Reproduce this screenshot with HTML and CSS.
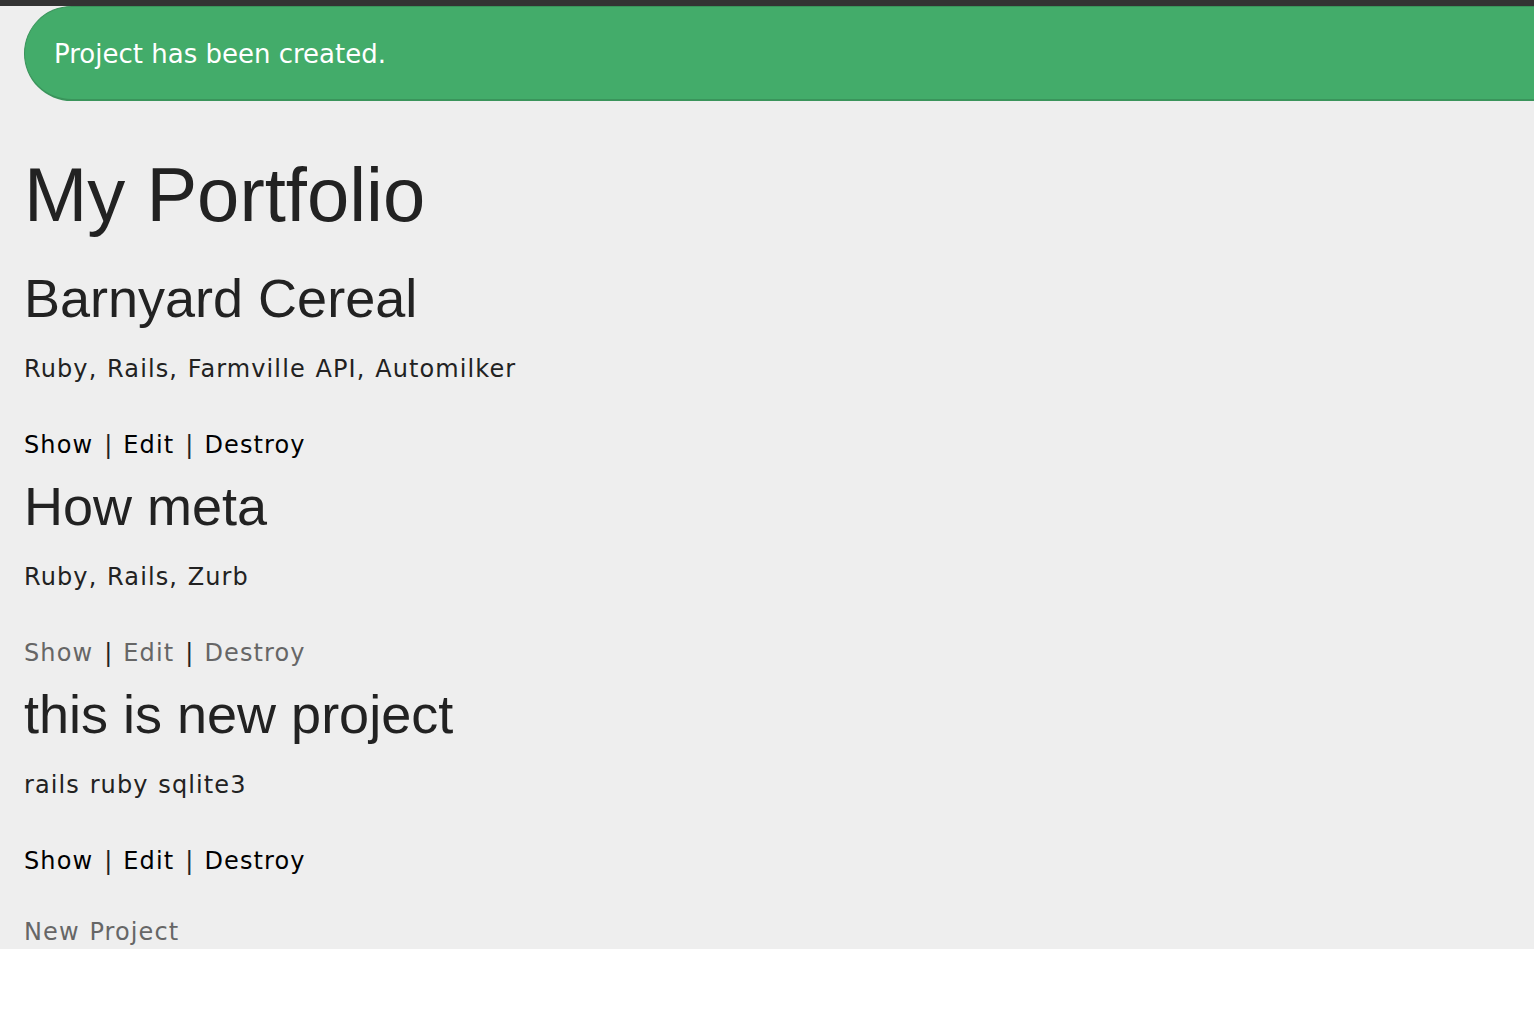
FILE: index.html
```html
<!DOCTYPE html>
<html>
<head>
<meta charset="utf-8">
<title>My Portfolio</title>
<link rel="stylesheet" href="styles.css">
</head>
<body>
<div class="topbar"></div>
<div class="page">
  <div class="flash">Project has been created.</div>
  <h1 class="title">My Portfolio</h1>

  <div class="project">
    <h2 class="project-name">Barnyard Cereal</h2>
    <p class="tags">Ruby, Rails, Farmville API, Automilker</p>
    <div class="actions"><a href="#" class="link">Show</a><span class="sep">|</span><a href="#" class="link">Edit</a><span class="sep">|</span><a href="#" class="link">Destroy</a></div>
  </div>

  <div class="project">
    <h2 class="project-name">How meta</h2>
    <p class="tags">Ruby, Rails, Zurb</p>
    <div class="actions"><a href="#" class="link muted">Show</a><span class="sep">|</span><a href="#" class="link muted">Edit</a><span class="sep">|</span><a href="#" class="link muted">Destroy</a></div>
  </div>

  <div class="project">
    <h2 class="project-name">this is new project</h2>
    <p class="tags">rails ruby sqlite3</p>
    <div class="actions"><a href="#" class="link">Show</a><span class="sep">|</span><a href="#" class="link">Edit</a><span class="sep">|</span><a href="#" class="link">Destroy</a></div>
  </div>

  <div class="new-link"><a href="#" class="link muted">New Project</a></div>
</div>
</body>
</html>
```

FILE: styles.css
```css
html {
  background: #ffffff;
}
body {
  margin: 0;
  font-family: "DejaVu Sans", Verdana, sans-serif;
  color: #222222;
  overflow-x: hidden;
}
.topbar {
  height: 6px;
  background: #333333;
}
.page {
  background: #eeeeee;
  padding: 0 0 0 24px;
  height: 943px;
  box-sizing: border-box;
}
.flash {
  height: 95px;
  box-sizing: border-box;
  margin-right: -20px;
  background: #43ac6a;
  border: 1px solid #3a945b;
  border-bottom-width: 2px;
  border-right: none;
  border-radius: 48px 0 0 48px;
  color: #ffffff;
  font-family: "DejaVu Sans", Tahoma, sans-serif;
  font-size: 26px;
  line-height: 90px;
  padding-top: 2px;
  padding-left: 29px;
}
.title {
  font-family: "Liberation Sans", Arial, sans-serif;
  font-weight: normal;
  font-size: 76px;
  line-height: 84px;
  margin: 52px 0 31px;
  color: #222222;
}
.project-name {
  font-family: "Liberation Sans", Arial, sans-serif;
  font-weight: normal;
  font-size: 54px;
  line-height: 60px;
  margin: 13px 0 0;
  color: #222222;
}
.tags {
  font-size: 24px;
  line-height: 36px;
  margin: 23px 0 0;
  color: #222222;
  letter-spacing: 1.1px;
  word-spacing: 1px;
}
.actions {
  display: flex;
  align-items: baseline;
  font-size: 24px;
  line-height: 36px;
  margin-top: 40px;
  color: #222222;
  letter-spacing: 1.1px;
}
.sep {
  padding: 0 10px 0 11px;
}
.link {
  color: #000000;
  text-decoration: none;
}
.link.muted {
  color: #666666;
}
.new-link {
  font-size: 24px;
  line-height: 34px;
  margin-top: 36px;
  letter-spacing: 1.1px;
  word-spacing: 1px;
}
```
